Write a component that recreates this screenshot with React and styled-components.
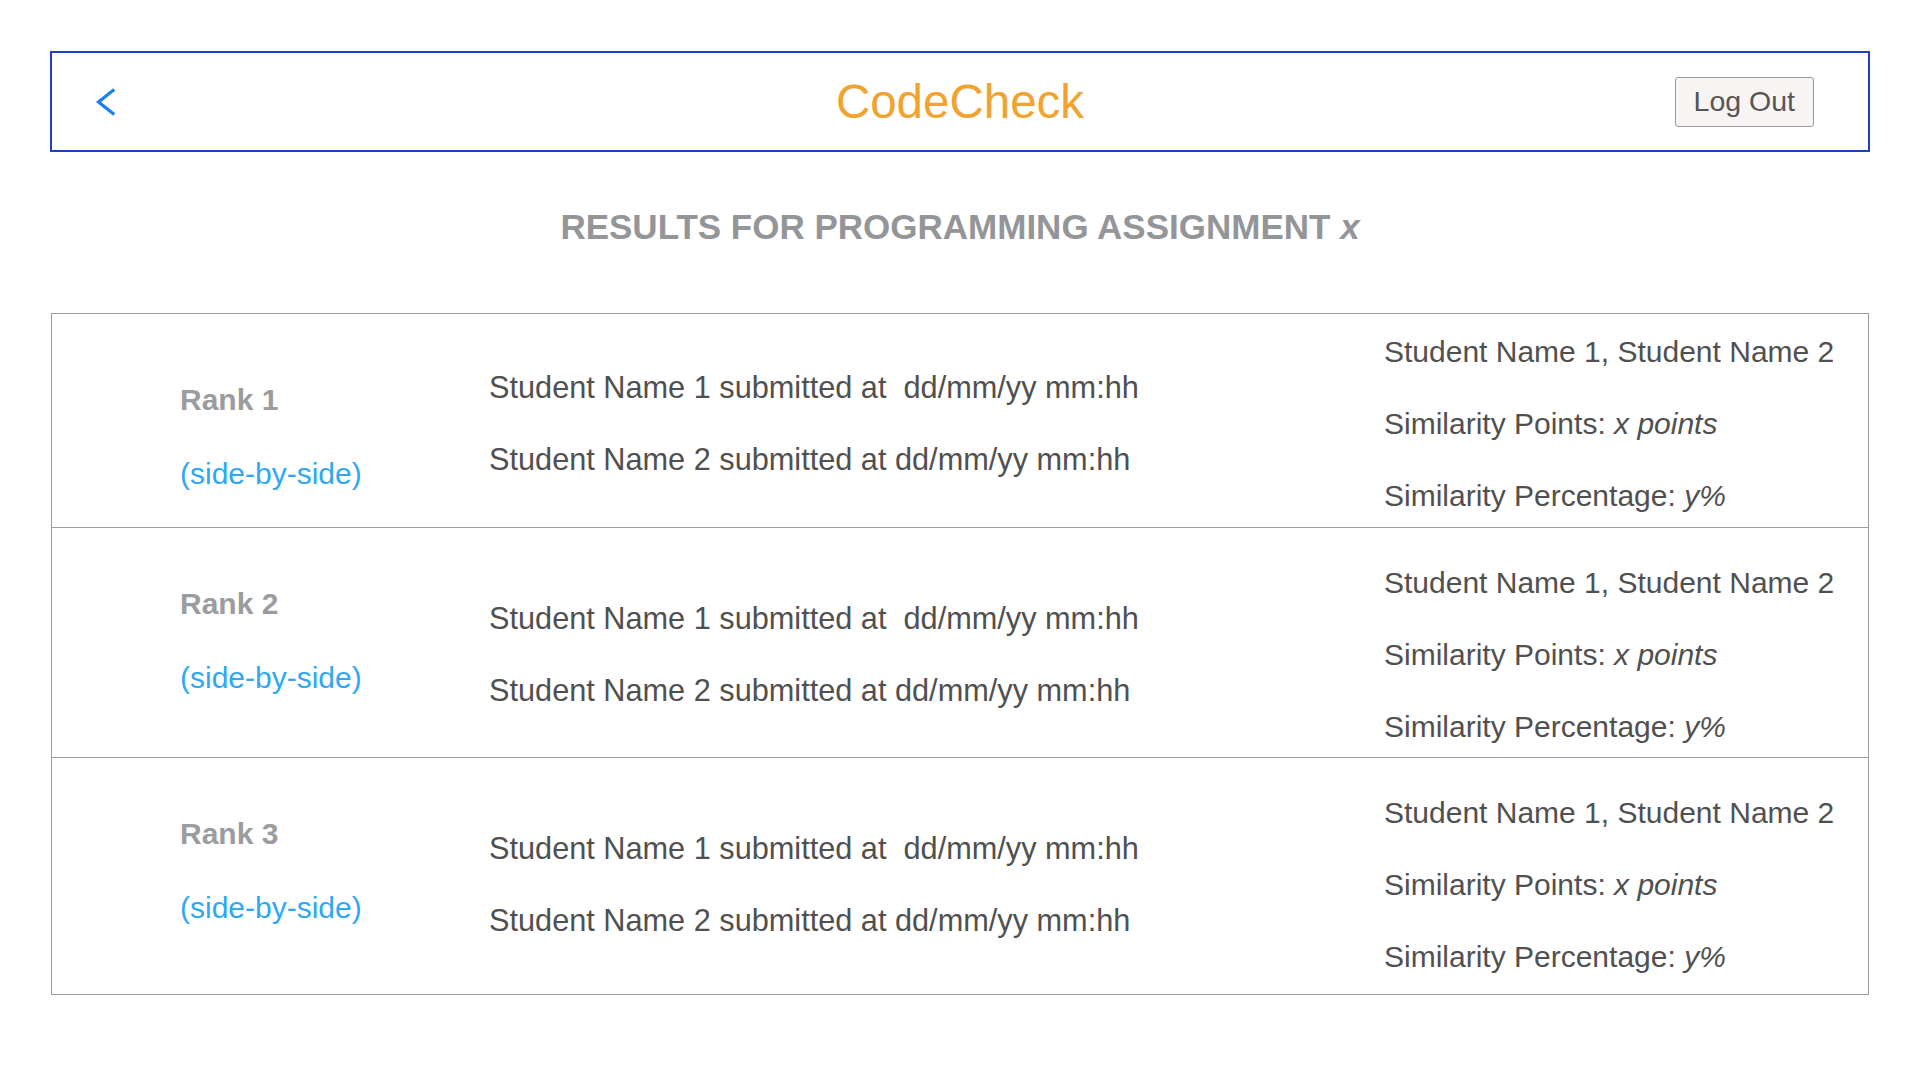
import React from 'react';
import styled, { createGlobalStyle } from 'styled-components';

const GlobalStyle = createGlobalStyle`
  html, body {
    margin: 0;
    padding: 0;
    background: #ffffff;
    font-family: "Liberation Sans", Arial, Helvetica, sans-serif;
  }
`;

const COLORS = {
  BLUE_BORDER: '#1b3fc6',
  BACK: '#1a7ef5',
  ORANGE: '#f0a32e',
  GREY_TITLE: '#939598',
  GREY_RANK: '#9a9c9f',
  TEXT: '#505050',
  LINK: '#2ea8f5',
  RULE: '#9c9c9c',
};

const Page = styled.div`
  padding: 51px 50px 40px 50px;
`;

const Header = styled.header`
  height: 97px;
  border: 2px solid ${COLORS.BLUE_BORDER};
  display: grid;
  grid-template-columns: 1fr auto 1fr;
  align-items: center;
  padding: 0 43px;
`;

const BackButton = styled.button`
  justify-self: start;
  background: none;
  border: none;
  padding: 0;
  display: flex;
  cursor: pointer;
`;

const Brand = styled.h1`
  margin: 0;
  font-size: 47.5px;
  font-weight: 400;
  color: ${COLORS.ORANGE};
  line-height: 1;
`;

const LogOut = styled.button`
  justify-self: end;
  margin-right: 11px;
  height: 50px;
  padding: 0 18px;
  font-family: inherit;
  font-size: 28.5px;
  color: #555555;
  background: #f9f4f4;
  border: 1px solid #9a9a9a;
  border-radius: 3px;
`;

const Title = styled.h2`
  margin: 55px 0 66px;
  text-align: center;
  font-size: 35px;
  line-height: 40px;
  font-weight: 700;
  color: ${COLORS.GREY_TITLE};
`;

const Table = styled.div`
  margin: 0 1px;
  border: 1px solid ${COLORS.RULE};
`;

const Row = styled.div`
  display: grid;
  grid-template-columns: 309px 895px 1fr;
  padding: ${(p) => p.$top}px 0 ${(p) => p.$bottom}px 128px;
  font-size: 30px;
  color: ${COLORS.TEXT};

  & + & {
    border-top: 1px solid ${COLORS.RULE};
  }
`;

const RankCell = styled.div`
  display: flex;
  flex-direction: column;
  gap: 38px;
  margin-top: ${(p) => p.$offset}px;
  line-height: 36px;
`;

const Rank = styled.span`
  font-weight: 700;
  color: ${COLORS.GREY_RANK};
`;

const SideLink = styled.a`
  color: ${COLORS.LINK};
  text-decoration: none;
`;

const Lines = styled.div`
  display: flex;
  flex-direction: column;
  justify-content: center;
  gap: 36px;
  line-height: 36px;
  font-size: ${(p) => p.$size || 30}px;
  white-space: pre;
`;

const ROWS = [
  { rank: 1, top: 20, bottom: 13, offset: 48 },
  { rank: 2, top: 37, bottom: 12, offset: 21 },
  { rank: 3, top: 37, bottom: 19, offset: 21 },
];

function ChevronLeft() {
  return (
    <svg width="22" height="28" viewBox="0 0 22 28">
      <polyline
        points="18,2.5 3.5,14 18,25.5"
        fill="none"
        stroke={COLORS.BACK}
        strokeWidth="3.2"
        strokeLinecap="square"
      />
    </svg>
  );
}

export default function App() {
  return (
    <Page>
      <GlobalStyle />
      <Header>
        <BackButton aria-label="Back">
          <ChevronLeft />
        </BackButton>
        <Brand>CodeCheck</Brand>
        <LogOut>Log Out</LogOut>
      </Header>

      <Title>
        RESULTS FOR PROGRAMMING ASSIGNMENT <i>x</i>
      </Title>

      <Table>
        {ROWS.map((r) => (
          <Row key={r.rank} $top={r.top} $bottom={r.bottom}>
            <RankCell $offset={r.offset}>
              <Rank>Rank {r.rank}</Rank>
              <SideLink href="#">(side-by-side)</SideLink>
            </RankCell>
            <Lines $size={30.7}>
              <span>Student Name 1 submitted at  dd/mm/yy mm:hh</span>
              <span>Student Name 2 submitted at dd/mm/yy mm:hh</span>
            </Lines>
            <Lines>
              <span>Student Name 1, Student Name 2</span>
              <span>
                Similarity Points: <i>x points</i>
              </span>
              <span>
                Similarity Percentage: <i>y%</i>
              </span>
            </Lines>
          </Row>
        ))}
      </Table>
    </Page>
  );
}
